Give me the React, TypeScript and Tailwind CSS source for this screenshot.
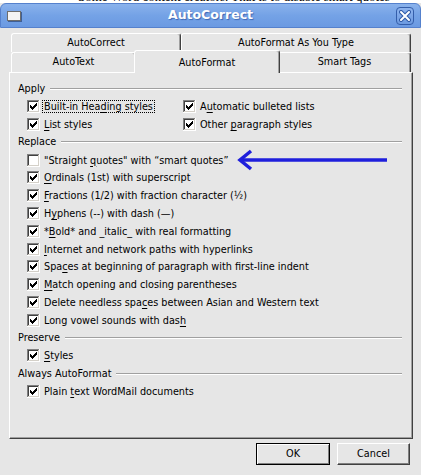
import React from 'react';

type Opt = { label: string; checked: boolean; focus?: boolean };

const apply: [Opt, Opt][] = [
  [
    { label: 'Built-in Hea&ding styles', checked: true, focus: true },
    { label: 'A&utomatic bulleted lists', checked: true },
  ],
  [
    { label: '&List styles', checked: true },
    { label: 'Other &paragraph styles', checked: true },
  ],
];

const replace: Opt[] = [
  { label: '&Ordinals (1st) with superscript', checked: true },
  { label: '&Fractions (1/2) with fraction character (½)', checked: true },
  { label: 'H&yphens (--) with dash (—)', checked: true },
  { label: '*&Bold* and _italic_ with real formatting', checked: true },
  { label: '&Internet and network paths with hyperlinks', checked: true },
  { label: 'Spa&ces at beginning of paragraph with first-line indent', checked: true },
  { label: '&Match opening and closing parentheses', checked: true },
  { label: 'Delete needless spa&ces between Asian and Western text', checked: true },
  { label: 'Long vowel sounds with das&h', checked: true },
];

function Mnemonic({ text }: { text: string }) {
  const i = text.indexOf('&');
  if (i < 0) return <>{text}</>;
  return (
    <>
      {text.slice(0, i)}
      <span className="underline underline-offset-[2px]">{text[i + 1]}</span>
      {text.slice(i + 2)}
    </>
  );
}

function CheckBox({ checked }: { checked: boolean }) {
  return (
    <svg width="13" height="13" viewBox="0 0 13 13" shapeRendering="crispEdges" className="shrink-0">
      <rect x="0" y="0" width="13" height="13" fill="#ffffff" />
      <path d="M0 0h12v1H1v11H0z" fill="#808080" />
      <path d="M1 1h10v1H2v9H1z" fill="#404040" />
      <path d="M11 1h1v11H1v-1h10z" fill="#d4d0c8" />
      <rect x="2" y="2" width="9" height="9" fill="#ffffff" />
      {checked && (
        <path
          d="M3 5h1v3H3zM4 6h1v3H4zM5 7h1v3H5zM6 6h1v3H6zM7 5h1v3H7zM8 4h1v3H8zM9 3h1v3H9z"
          fill="#000000"
        />
      )}
    </svg>
  );
}

function Item({ opt, children }: { opt: Opt; children?: React.ReactNode }) {
  return (
    <div className="flex items-center h-[17.8px] gap-[4px]">
      <CheckBox checked={opt.checked} />
      <span
        className={
          opt.focus
            ? 'outline-1 outline-dotted outline-black px-[1px] -ml-[1px] leading-[11px]'
            : 'leading-[11px]'
        }
      >
        <Mnemonic text={opt.label} />
      </span>
      {children}
    </div>
  );
}

function Section({ title }: { title: string }) {
  return (
    <div className="flex items-center h-[17.8px]">
      <span>{title}</span>
      <div className="flex-1 ml-[5px] h-[2px] border-t border-t-[#a0a0a0] border-b border-b-white" />
    </div>
  );
}

function Tab({ w, children }: { w: string; children: React.ReactNode }) {
  return (
    <div
      className={`${w} h-full flex items-center justify-center border-l border-t border-white border-r border-r-[#404040] rounded-t-[3px] shadow-[inset_-1px_0_0_#a0a0a0]`}
    >
      {children}
    </div>
  );
}

function Arrow() {
  return (
    <svg width="154" height="22" viewBox="0 0 154 22" className="ml-[4px] shrink-0">
      <path d="M4 11H151" stroke="#1f1fdc" strokeWidth="3.5" fill="none" />
      <path d="M15 2L4 11L15 20" stroke="#1f1fdc" strokeWidth="3.5" fill="none" strokeLinejoin="miter" />
    </svg>
  );
}

export default function App() {
  return (
    <div className="w-[421px] h-[475px] overflow-hidden bg-white text-[10.75px] text-black font-['DejaVu_Sans_Condensed','DejaVu_Sans',sans-serif]">
      <div className="h-[3px] overflow-hidden pl-[78px]">
        <div className="-mt-[10px] leading-[13px] text-[13px] whitespace-nowrap font-['Liberation_Serif',serif]">
          Some Word content creators. That is to disable smart quotes
        </div>
      </div>

      <div className="h-[472px] flex flex-col bg-[#e6e6e6]">
        {/* title bar */}
        <div className="h-[25px] shrink-0 grid grid-cols-[1fr_auto_1fr] items-center rounded-t-[6px] border border-[#5581cd] bg-gradient-to-b from-[#8ab2ec] via-[#74a2e6] to-[#6b9ae2]">
          <div className="pl-[6px]">
            <div className="w-[14px] h-[10px] bg-[#f4f4f4] border border-[#6d6d6d] shadow-[1px_1px_0_#3f5f96]" />
          </div>
          <div className="font-['DejaVu_Sans',sans-serif] font-bold text-[12.5px] text-white [text-shadow:1px_1px_1px_#3d68b5]">
            AutoCorrect
          </div>
          <div className="flex justify-end pr-[6px]">
            <div className="w-[18px] h-[18px] rounded-[4px] border border-[#345eaa] bg-gradient-to-b from-[#8db3ee] to-[#6c9ae0] flex items-center justify-center">
              <svg width="12" height="12" viewBox="0 0 12 12">
                <path d="M2 2L10 10M10 2L2 10" stroke="#2f5aa6" strokeWidth="4" strokeLinecap="round" />
                <path d="M2 2L10 10M10 2L2 10" stroke="#ffffff" strokeWidth="2" strokeLinecap="round" />
              </svg>
            </div>
          </div>
        </div>

        {/* tabs */}
        <div className="pt-[5px]">
          <div className="flex pl-[11px] h-[19px]">
            <Tab w="w-[170px]">AutoCorrect</Tab>
            <Tab w="w-[230px]">AutoFormat As You Type</Tab>
          </div>
          <div className="flex items-end pl-[11px] h-[20px]">
            <Tab w="w-[125px]">AutoText</Tab>
            <div className="relative z-10 w-[146px] h-[23px] -mx-[2px] -mb-[1px] bg-[#e6e6e6] flex items-start pt-[4px] justify-center border-l border-t border-white border-r border-r-[#404040] rounded-t-[3px] shadow-[inset_-1px_0_0_#a0a0a0]">
              AutoFormat
            </div>
            <Tab w="w-[133px]">Smart Tags</Tab>
          </div>
        </div>

        {/* panel */}
        <div className="ml-[9px] mr-[8px] h-[367px] border border-white border-r-[#404040] border-b-[#404040] shadow-[inset_-1px_-1px_0_#a0a0a0] pt-[7px] pl-[8px] pr-[10px]">
          <Section title="Apply" />
          <div className="pl-[9px]">
            {apply.map(([a, b], i) => (
              <div key={i} className="flex">
                <div className="w-[156px]">
                  <Item opt={a} />
                </div>
                <Item opt={b} />
              </div>
            ))}
          </div>
          <Section title="Replace" />
          <div className="pl-[9px]">
            <Item opt={{ label: '"Straight &quotes" with \u201csmart quotes\u201d', checked: false }}>
              <Arrow />
            </Item>
            {replace.map((o) => (
              <Item key={o.label} opt={o} />
            ))}
          </div>
          <Section title="Preserve" />
          <div className="pl-[9px]">
            <Item opt={{ label: '&Styles', checked: true }} />
          </div>
          <Section title="Always AutoFormat" />
          <div className="pl-[9px]">
            <Item opt={{ label: 'Plain &text WordMail documents', checked: true }} />
          </div>
        </div>

        {/* buttons */}
        <div className="mt-[4px] flex justify-end gap-[7px] pr-[11px]">
          <button className="w-[74px] h-[22px] border border-black shadow-[inset_1px_1px_0_#ffffff,inset_-1px_-1px_0_#808080] flex items-center justify-center">
            OK
          </button>
          <button className="w-[73px] h-[22px] border border-white border-r-[#404040] border-b-[#404040] shadow-[inset_-1px_-1px_0_#808080] flex items-center justify-center">
            Cancel
          </button>
        </div>
      </div>
    </div>
  );
}
